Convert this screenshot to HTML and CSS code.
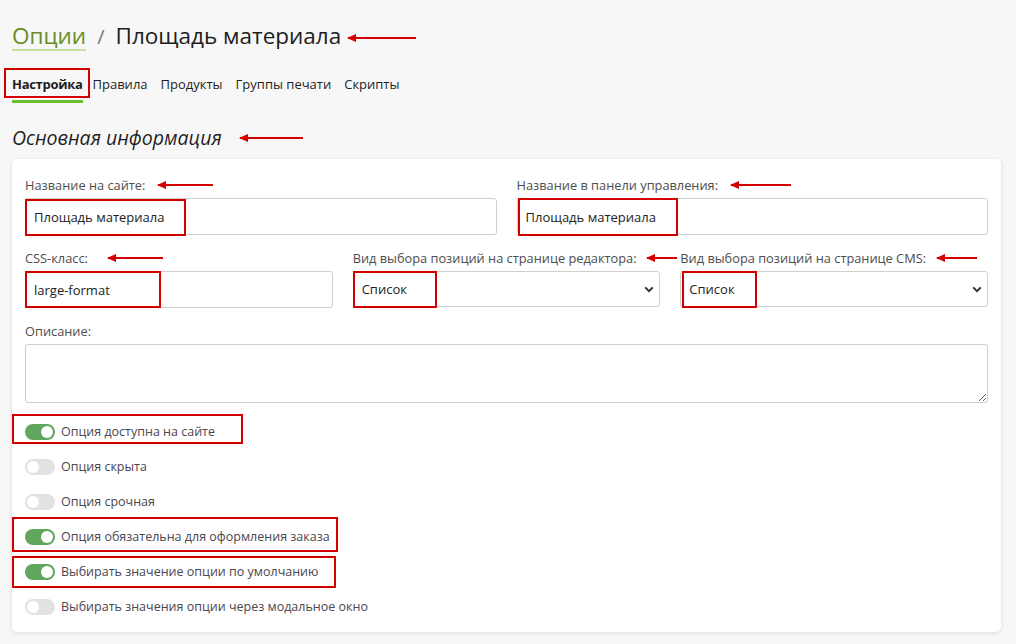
FILE: index.html
```html
<!DOCTYPE html>
<html lang="ru">
<head>
<meta charset="utf-8">
<title>Площадь материала</title>
<link rel="stylesheet" href="styles.css">
</head>
<body>
<div class="page">
  <h1 class="title"><a class="crumb" href="#">Опции</a><span class="sep">/</span><span class="current">Площадь материала</span></h1>
  <nav class="tabs">
    <a class="tab active" href="#">Настройка</a>
    <a class="tab" href="#">Правила</a>
    <a class="tab" href="#">Продукты</a>
    <a class="tab" href="#">Группы печати</a>
    <a class="tab" href="#">Скрипты</a>
  </nav>
  <h2 class="section">Основная информация</h2>
  <div class="card">
    <div class="row two">
      <div class="field">
        <label class="label">Название на сайте:</label>
        <input class="input" type="text" value="Площадь материала">
      </div>
      <div class="field">
        <label class="label">Название в панели управления:</label>
        <input class="input" type="text" value="Площадь материала">
      </div>
    </div>
    <div class="row three">
      <div class="field">
        <label class="label">CSS-класс:</label>
        <input class="input" type="text" value="large-format">
      </div>
      <div class="field">
        <label class="label">Вид выбора позиций на странице редактора:</label>
        <div class="select">
          <span>Список</span>
          <svg class="chev" width="10" height="7" viewBox="0 0 10 7"><path d="M1.2 1.4 L5 5.2 L8.8 1.4" fill="none" stroke="#333" stroke-width="2"/></svg>
        </div>
      </div>
      <div class="field">
        <label class="label">Вид выбора позиций на странице CMS:</label>
        <div class="select">
          <span>Список</span>
          <svg class="chev" width="10" height="7" viewBox="0 0 10 7"><path d="M1.2 1.4 L5 5.2 L8.8 1.4" fill="none" stroke="#333" stroke-width="2"/></svg>
        </div>
      </div>
    </div>
    <div class="field">
      <label class="label">Описание:</label>
      <textarea class="textarea"></textarea>
    </div>
    <ul class="toggles">
      <li class="trow"><span class="switch on"></span>Опция доступна на сайте</li>
      <li class="trow"><span class="switch"></span>Опция скрыта</li>
      <li class="trow"><span class="switch"></span>Опция срочная</li>
      <li class="trow"><span class="switch on"></span>Опция обязательна для оформления заказа</li>
      <li class="trow"><span class="switch on"></span>Выбирать значение опции по умолчанию</li>
      <li class="trow"><span class="switch"></span>Выбирать значения опции через модальное окно</li>
    </ul>
  </div>
</div>

<div class="marks">
  <div class="arrow" style="left:348px;top:37px;width:68px"></div>
  <div class="box" style="left:4px;top:68px;width:86px;height:30px"></div>
  <div class="arrow" style="left:240px;top:137px;width:63px"></div>
  <div class="arrow" style="left:158px;top:184px;width:55px"></div>
  <div class="box" style="left:25px;top:199px;width:161px;height:37px"></div>
  <div class="arrow" style="left:731px;top:184px;width:60px"></div>
  <div class="box" style="left:518px;top:198px;width:160px;height:38px"></div>
  <div class="arrow" style="left:108px;top:257px;width:55px"></div>
  <div class="box" style="left:25px;top:271px;width:136px;height:37px"></div>
  <div class="arrow" style="left:647px;top:257px;width:30px"></div>
  <div class="box" style="left:353px;top:271px;width:84px;height:37px"></div>
  <div class="arrow" style="left:937px;top:257px;width:40px"></div>
  <div class="box" style="left:682px;top:271px;width:75px;height:37px"></div>
  <div class="box" style="left:12px;top:414px;width:231px;height:30px"></div>
  <div class="box" style="left:12px;top:517px;width:326px;height:35px"></div>
  <div class="box" style="left:12px;top:556px;width:324px;height:32px"></div>
</div>
</body>
</html>
```

FILE: styles.css
```css
* { box-sizing: border-box; }
html, body { margin: 0; padding: 0; }
body {
  background: #f7f7f7;
  font-family: "Open Sans", "Noto Sans", sans-serif;
  font-size: 13px;
  color: #333;
  position: relative;
  width: 1016px;
  height: 644px;
  overflow: hidden;
}
.page { padding: 20px 15px 0 12px; }
.title {
  margin: 0;
  font-weight: 400;
  font-size: 22.5px;
  line-height: 32px;
  height: 32px;
  display: flex;
  align-items: baseline;
  color: #1d1d1d;
}
.crumb {
  color: #6a8c26;
  text-decoration: none;
  border-bottom: 2px solid #c7df9c;
  line-height: 27px;
}
.sep { color: #777; margin: 0 11px; font-size: 20px; }
.tabs {
  display: flex;
  gap: 13px;
  margin-top: 22px;
}
.tab {
  color: #1f1f1f;
  text-decoration: none;
  font-size: 13px;
  line-height: 20px;
  padding-bottom: 6px;
  border-bottom: 3px solid transparent;
}
.tab.active {
  font-weight: 700;
  letter-spacing: -0.3px;
  border-bottom-color: #6cbd2c;
  margin-right: -3px;
}
.section {
  margin: 22px 0 0;
  font-style: italic;
  font-weight: 400;
  font-size: 19.5px;
  line-height: 26px;
  color: #1f1f1f;
}
.card {
  margin-top: 8px;
  background: #fff;
  border-radius: 5px;
  box-shadow: 0 1px 4px rgba(0,0,0,0.12);
  padding: 16px 13px 8px;
}
.row { display: grid; gap: 20px; margin-bottom: 13px; }
.row.two { grid-template-columns: 1fr 1fr; }
.row.three { grid-template-columns: 1fr 1fr 1fr; }
.field { display: flex; flex-direction: column; min-width: 0; }
.label {
  color: #4d4d4d;
  font-size: 12.8px;
  line-height: 20px;
  margin-bottom: 3px;
  white-space: nowrap;
}
.input, .select, .textarea {
  border: 1px solid #cfcfcf;
  border-radius: 3px;
  background: #fff;
  font-family: "Open Sans", "Noto Sans", sans-serif;
  font-size: 13px;
  color: #222;
}
.input { height: 37px; padding: 0 8px; width: 100%; outline: none; }
.select {
  height: 36px;
  padding: 0 5px 0 8px;
  display: flex;
  align-items: center;
  justify-content: space-between;
}
.chev { display: block; }
.textarea { height: 59px; width: 100%; resize: vertical; display: block; outline: none; }
.toggles { list-style: none; margin: 11px 0 0; padding: 0; }
.trow {
  height: 35px;
  display: flex;
  align-items: center;
  gap: 6px;
  color: #4b4650;
  font-size: 12.5px;
}
.switch {
  width: 30px;
  height: 16px;
  border-radius: 8px;
  background: #e2e2e2;
  position: relative;
  flex: none;
}
.switch::after {
  content: "";
  position: absolute;
  top: 2px;
  left: 2px;
  width: 12px;
  height: 12px;
  border-radius: 50%;
  background: #fff;
}
.switch.on { background: #62a65d; }
.switch.on::after { left: 16px; }
.marks { position: absolute; inset: 0; pointer-events: none; }
.box { position: absolute; border: 2px solid #d40000; }
.arrow { position: absolute; height: 2px; background: #d40000; }
.arrow::before {
  content: "";
  position: absolute;
  left: -1px;
  top: -3px;
  border-right: 9px solid #d40000;
  border-top: 4px solid transparent;
  border-bottom: 4px solid transparent;
}
```
